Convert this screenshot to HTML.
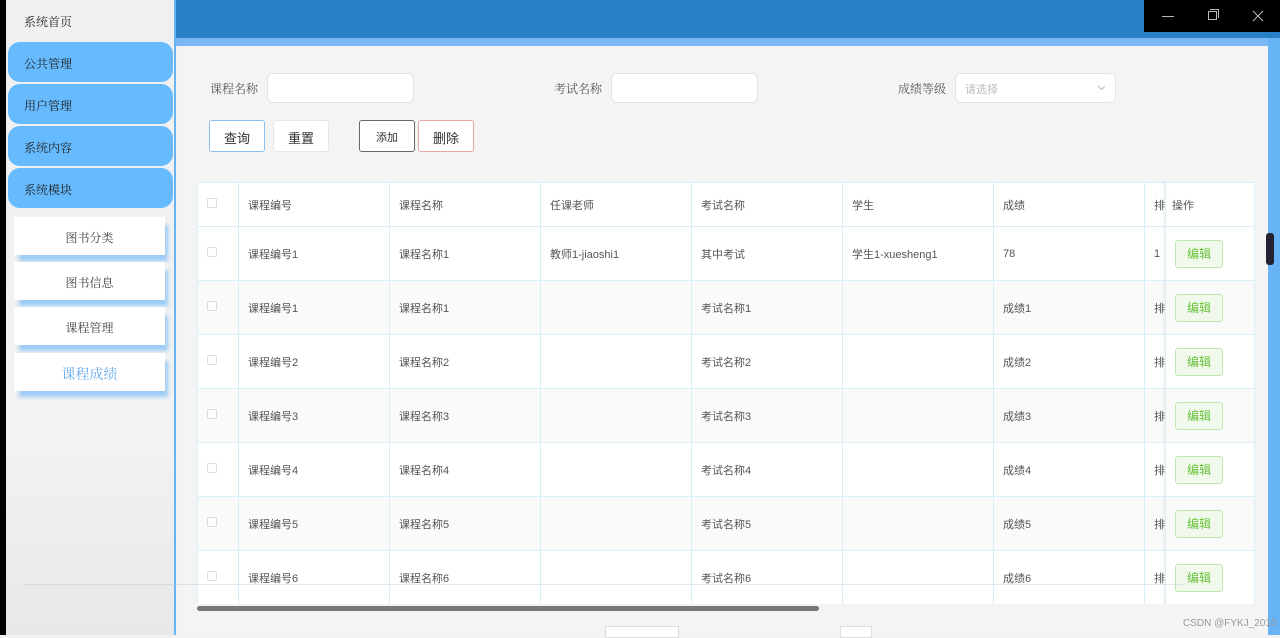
<!DOCTYPE html>
<html><head><meta charset="utf-8"><style>
*{margin:0;padding:0;box-sizing:border-box}
body{width:1280px;height:635px;overflow:hidden;position:relative;background:#f2f2f2;font-family:"Liberation Sans","Noto Sans CJK SC",sans-serif;color:#606266;font-size:12px}
.abs{position:absolute}
.menu{position:absolute;left:8px;width:165px;height:40px;background:#66bbff;border-radius:12px;font-family:"Noto Serif CJK SC","Liberation Serif",serif;font-size:12px;color:#222;padding:13px 0 0 16px}
.sub{position:absolute;left:14px;width:151px;height:38px;background:#fff;text-align:center;font-family:"Noto Serif CJK SC","Liberation Serif",serif;font-size:12px;color:#444;padding-top:12px;box-shadow:4px 7px 4px -1px #9cccf6}
.lbl{position:absolute;font-family:"Noto Serif CJK SC","Liberation Serif",serif;font-size:12px;color:#555}
.inp{position:absolute;height:30px;background:#fff;border:1px solid #e4e4e4;border-radius:6px}
.btn{position:absolute;top:120px;height:32px;background:#fff;border-radius:3px;font-size:13px;color:#333;text-align:center;padding-top:7px}
table{position:absolute;left:197px;top:182px;border-collapse:collapse;background:#fff;table-layout:fixed}
td{border:1px solid #d8eef9;height:54px;padding-left:9px;font-size:11px;color:#555;white-space:nowrap;overflow:hidden}
tr:first-child td{height:44px}
tr:nth-child(odd) td{background:#fafafa}
tr:first-child td{background:#fff}
.cb{display:inline-block;width:10px;height:10px;border:1px solid #ddd;border-radius:2px;background:#fff}
.ed{display:inline-block;width:48px;height:28px;border:1px solid #c2e7b0;background:#f0f9eb;color:#67c23a;border-radius:3px;text-align:center;line-height:26px;font-size:12px}
</style></head><body>
<div class="abs" style="left:0;top:0;width:6px;height:635px;background:#000"></div>
<div class="abs" style="left:6px;top:0;width:168px;height:635px;background:linear-gradient(#f0f0f0,#f2f2f2 70%,#e8e8e8)"></div>
<div class="abs" style="left:24px;top:13px;font-family:'Noto Serif CJK SC','Liberation Serif',serif;font-size:12px;color:#222">系统首页</div>
<div class="menu" style="top:42px">公共管理</div>
<div class="menu" style="top:84px">用户管理</div>
<div class="menu" style="top:126px">系统内容</div>
<div class="menu" style="top:168px">系统模块</div>
<div class="sub" style="top:217px">图书分类</div>
<div class="sub" style="top:262px">图书信息</div>
<div class="sub" style="top:307px">课程管理</div>
<div class="sub" style="top:353px;font-size:14px;color:#66aaee;padding-top:11px">课程成绩</div>
<div class="abs" style="left:174px;top:0;width:2px;height:635px;background:#66b3f5"></div>
<div class="abs" style="left:176px;top:0;width:1104px;height:38px;background:#2a80c6"></div>
<div class="abs" style="left:1144px;top:0;width:136px;height:32px;background:#000;color:#bbb">
<span class="abs" style="left:18px;top:16px;width:12px;height:1px;background:#bbb"></span>
<span class="abs" style="left:64px;top:11px;width:9px;height:9px;border:1px solid #bbb"></span><span class="abs" style="left:66px;top:9px;width:9px;height:9px;border-top:1px solid #bbb;border-right:1px solid #bbb"></span>
<svg class="abs" style="left:108px;top:10px" width="12" height="12"><path d="M1 1L11 11M11 1L1 11" stroke="#bbb" stroke-width="1"/></svg></div>
<div class="abs" style="left:176px;top:38px;width:1104px;height:8px;background:#7ab8f5"></div>
<div class="abs" style="left:182px;top:46px;width:1086px;height:589px;background:#f4f4f4"></div>
<div class="abs" style="left:1268px;top:38px;width:12px;height:597px;background:#66b3f5"></div>
<div class="abs" style="left:1266px;top:233px;width:8px;height:32px;background:#223;border-radius:3px"></div>
<div class="lbl" style="left:210px;top:80px">课程名称</div>
<div class="inp" style="left:267px;top:73px;width:147px"></div>
<div class="lbl" style="left:554px;top:80px">考试名称</div>
<div class="inp" style="left:611px;top:73px;width:147px"></div>
<div class="lbl" style="left:898px;top:80px">成绩等级</div>
<div class="inp" style="left:955px;top:73px;width:161px;color:#bbb;font-size:11px;padding:7px 0 0 9px">请选择<svg style="position:absolute;right:9px;top:11px" width="9" height="6"><path d="M1 1L4.5 4.5L8 1" stroke="#bbb" fill="none"/></svg></div>
<div class="btn" style="left:209px;width:56px;border:1px solid #8ec0ee">查询</div>
<div class="btn" style="left:273px;width:56px;border:1px solid #e6e6e6">重置</div>
<div class="btn" style="left:359px;width:56px;border:1px solid #666;font-size:11px;padding-top:8px">添加</div>
<div class="btn" style="left:418px;width:56px;border:1px solid #e6a8a0">删除</div>
<table>
<colgroup><col style="width:41px"><col style="width:151px"><col style="width:151px"><col style="width:151px"><col style="width:151px"><col style="width:151px"><col style="width:151px"><col style="width:18px"><col style="width:89px"></colgroup>
<tr><td><span class="cb"></span></td><td>课程编号</td><td>课程名称</td><td>任课老师</td><td>考试名称</td><td>学生</td><td>成绩</td><td>排</td><td style="padding-left:6px">操作</td></tr>
<tr><td><span class="cb"></span></td><td>课程编号1</td><td>课程名称1</td><td>教师1-jiaoshi1</td><td>其中考试</td><td>学生1-xuesheng1</td><td>78</td><td>1</td><td><span class="ed">编辑</span></td></tr>
<tr><td><span class="cb"></span></td><td>课程编号1</td><td>课程名称1</td><td></td><td>考试名称1</td><td></td><td>成绩1</td><td>排</td><td><span class="ed">编辑</span></td></tr>
<tr><td><span class="cb"></span></td><td>课程编号2</td><td>课程名称2</td><td></td><td>考试名称2</td><td></td><td>成绩2</td><td>排</td><td><span class="ed">编辑</span></td></tr>
<tr><td><span class="cb"></span></td><td>课程编号3</td><td>课程名称3</td><td></td><td>考试名称3</td><td></td><td>成绩3</td><td>排</td><td><span class="ed">编辑</span></td></tr>
<tr><td><span class="cb"></span></td><td>课程编号4</td><td>课程名称4</td><td></td><td>考试名称4</td><td></td><td>成绩4</td><td>排</td><td><span class="ed">编辑</span></td></tr>
<tr><td><span class="cb"></span></td><td>课程编号5</td><td>课程名称5</td><td></td><td>考试名称5</td><td></td><td>成绩5</td><td>排</td><td><span class="ed">编辑</span></td></tr>
<tr><td><span class="cb"></span></td><td>课程编号6</td><td>课程名称6</td><td></td><td>考试名称6</td><td></td><td>成绩6</td><td>排</td><td><span class="ed">编辑</span></td></tr>
</table>
<div class="abs" style="left:1163px;top:182px;width:2px;height:422px;background:rgba(0,0,0,.04)"></div>
<div class="abs" style="left:197px;top:604px;width:1060px;height:8px;background:#f4f4f4"></div>
<div class="abs" style="left:197px;top:606px;width:622px;height:5px;background:#777;border-radius:3px"></div>
<div class="abs" style="left:24px;top:584px;width:1160px;height:1px;background:rgba(180,200,215,.4)"></div>
<div class="abs" style="left:605px;top:626px;width:74px;height:12px;background:#fff;border:1px solid #ddd"></div>
<div class="abs" style="left:840px;top:626px;width:32px;height:12px;background:#fff;border:1px solid #ddd"></div>
<div class="abs" style="left:1183px;top:618px;font-size:10px;color:#999">CSDN @FYKJ_2010</div>
</body></html>
